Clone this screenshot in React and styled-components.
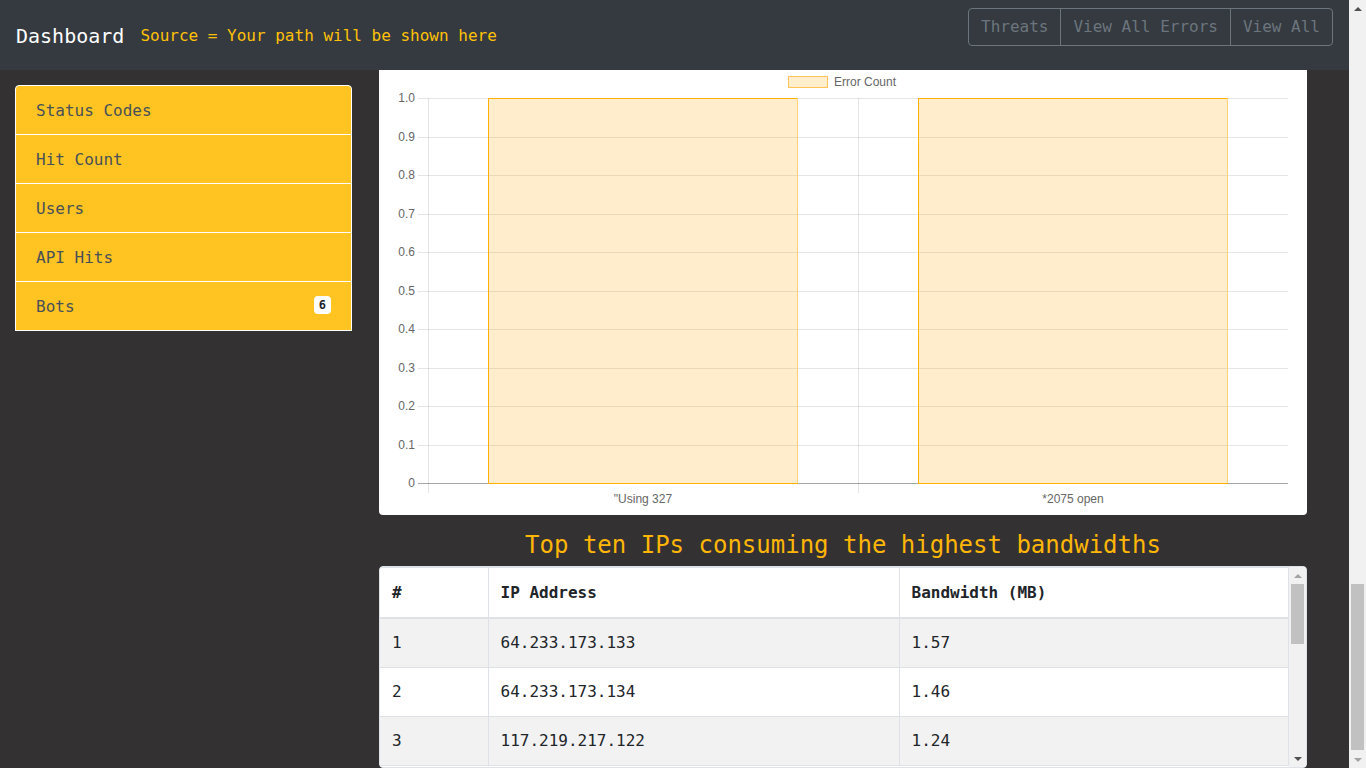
import React from 'react';
import styled, { createGlobalStyle } from 'styled-components';

const GlobalStyle = createGlobalStyle`
  html, body {
    margin: 0;
    padding: 0;
    height: 100%;
    overflow: hidden;
  }
  body {
    background: #333132;
    font-family: "DejaVu Sans Mono", "Liberation Mono", monospace;
  }
  * { box-sizing: border-box; }
`;

const topIps = [
  ['64.233.173.133', '1.57'],
  ['64.233.173.134', '1.46'],
  ['117.219.217.122', '1.24'],
];

const chartFont = 'Liberation Sans, Arial, sans-serif';
const barFill = 'rgba(255,167,0,0.2)';

function BarChart({ legend, labels, values, max = 1, steps = 10 }) {
  const W = 928, H = 445, L = 49, R = 909, T = 28, B = 413;
  const catW = (R - L) / labels.length;
  const barW = Math.round(catW * 0.72);
  const step = max / steps;
  const fmt = (v, i) => (i === 0 ? '0' : v.toFixed(1));
  const legendW = 46 + legend.length * 5.8;
  const lx = Math.round(W / 2 - legendW / 2);

  return (
    <svg width={W} height={H} viewBox={`0 0 ${W} ${H}`} style={{ display: 'block' }}>
      <rect x={lx + 0.5} y={6.5} width={39} height={11} fill={barFill} stroke="#ffc456" />
      <text x={lx + 46} y={16} fontFamily={chartFont} fontSize="12" fill="#666">{legend}</text>

      {Array.from({ length: steps + 1 }).map((_, i) => {
        const y = Math.round(B - (i * (B - T)) / steps) + 0.5;
        return (
          <g key={i}>
            <line x1={L - 10} x2={R} y1={y} y2={y} stroke={i === 0 ? 'rgba(0,0,0,0.35)' : 'rgba(0,0,0,0.1)'} />
            <text x={L - 13} y={y + 3} textAnchor="end" fontFamily={chartFont} fontSize="12" fill="#666">
              {fmt(i * step, i)}
            </text>
          </g>
        );
      })}

      {labels.map((_, i) => {
        const x = Math.round(L + i * catW) + 0.5;
        return <line key={i} x1={x} x2={x} y1={T} y2={B + 10} stroke="rgba(0,0,0,0.1)" />;
      })}

      {values.map((v, i) => {
        const h = Math.round(((B - T) * v) / max);
        const x = Math.round(L + i * catW + (catW - barW) / 2) + 0.5;
        return (
          <g key={i}>
            <rect x={x} y={B - h + 0.5} width={barW - 1} height={h} fill={barFill} stroke="#ffb000" />
            <line x1={x + barW - 1} x2={x + barW - 1} y1={B - h} y2={B} stroke="#ffd07a" />
          </g>
        );
      })}

      {labels.map((label, i) => (
        <text key={i} x={L + i * catW + catW / 2} y={433} textAnchor="middle" fontFamily={chartFont} fontSize="12" fill="#666">
          {label}
        </text>
      ))}
    </svg>
  );
}

function Scrollbar({ thumbOffset, thumbSize, upActive, downActive }) {
  return (
    <ScrollTrack>
      <ArrowBox>
        <ArrowUp $active={upActive} />
      </ArrowBox>
      <ThumbLane>
        <Thumb style={{ marginTop: thumbOffset, height: thumbSize }} />
      </ThumbLane>
      <ArrowBox>
        <ArrowDown $active={downActive} />
      </ArrowBox>
    </ScrollTrack>
  );
}

export default function App() {
  return (
    <>
      <GlobalStyle />
      <Root>
        <Page>
          <Header>
            <Brand>
              <Title>Dashboard</Title>
              <Source>Source = Your path will be shown here</Source>
            </Brand>
            <ButtonGroup>
              <NavButton>Threats</NavButton>
              <NavButton>View All Errors</NavButton>
              <NavButton>View All</NavButton>
            </ButtonGroup>
          </Header>

          <Layout>
            <Sidebar>
              <MenuItem>Status Codes</MenuItem>
              <MenuItem>Hit Count</MenuItem>
              <MenuItem>Users</MenuItem>
              <MenuItem>API Hits</MenuItem>
              <MenuItem>
                Bots
                <Badge>6</Badge>
              </MenuItem>
            </Sidebar>

            <Main>
              <Card>
                <BarChart legend="Error Count" labels={['"Using 327', '*2075 open']} values={[1, 1]} max={1} />
              </Card>

              <Heading>Top ten IPs consuming the highest bandwidths</Heading>
              <TableWrap>
                <TableArea>
                  <Table>
                    <thead>
                      <tr>
                        <Th $w={108}>#</Th>
                        <Th $w={411}>IP Address</Th>
                        <Th>Bandwidth (MB)</Th>
                      </tr>
                    </thead>
                    <tbody>
                      {topIps.map(([ip, mb], i) => (
                        <tr key={ip}>
                          <Td>{i + 1}</Td>
                          <Td>{ip}</Td>
                          <Td>{mb}</Td>
                        </tr>
                      ))}
                    </tbody>
                  </Table>
                </TableArea>
                <Scrollbar thumbOffset={0} thumbSize={60} upActive={false} downActive />
              </TableWrap>
            </Main>
          </Layout>
        </Page>
        <Scrollbar thumbOffset={567} thumbSize={166} upActive downActive={false} />
      </Root>
    </>
  );
}

const Root = styled.div`
  display: flex;
  height: 100vh;
  overflow: hidden;
  background: #333132;
`;

const Page = styled.div`
  flex: 1;
  min-width: 0;
  display: flex;
  flex-direction: column;
`;

const ScrollTrack = styled.div`
  width: 17px;
  flex: 0 0 17px;
  background: #f1f1f1;
  display: flex;
  flex-direction: column;
`;

const ArrowBox = styled.div`
  height: 17px;
  flex: 0 0 17px;
  display: flex;
  align-items: center;
  justify-content: center;
`;

const ArrowUp = styled.div`
  width: 0;
  height: 0;
  border-left: 4px solid transparent;
  border-right: 4px solid transparent;
  border-bottom: 4px solid ${(p) => (p.$active ? '#505050' : '#a3a3a3')};
`;

const ArrowDown = styled.div`
  width: 0;
  height: 0;
  border-left: 4px solid transparent;
  border-right: 4px solid transparent;
  border-top: 4px solid ${(p) => (p.$active ? '#505050' : '#a3a3a3')};
`;

const ThumbLane = styled.div`
  flex: 1;
  display: flex;
  flex-direction: column;
  padding: 0 2px;
`;

const Thumb = styled.div`
  background: #c1c1c1;
  flex: none;
`;

const Header = styled.header`
  height: 70px;
  flex: none;
  padding: 0 16px;
  background: #343a40;
  display: flex;
  justify-content: space-between;
  align-items: flex-start;
`;

const Brand = styled.div`
  height: 70px;
  display: flex;
  align-items: center;
  gap: 16px;
`;

const Title = styled.span`
  color: #fff;
  font-size: 20px;
  line-height: 30px;
  padding-top: 2px;
`;

const Source = styled.span`
  color: #ffc107;
  font-size: 16px;
  line-height: 24px;
  padding-top: 2px;
`;

const ButtonGroup = styled.div`
  display: flex;
  margin-top: 8px;
`;

const NavButton = styled.button`
  font-family: "DejaVu Sans Mono", "Liberation Mono", monospace;
  font-size: 16px;
  line-height: 24px;
  padding: 6px 12px;
  color: #6c757d;
  background: transparent;
  border: 1px solid #6c757d;
  border-radius: 0;

  & + & {
    margin-left: -1px;
  }
  &:first-child {
    border-radius: 4px 0 0 4px;
  }
  &:last-child {
    border-radius: 0 4px 4px 0;
  }
`;

const Layout = styled.div`
  display: grid;
  grid-template-columns: 337px 928px;
  column-gap: 27px;
  padding: 0 15px;
  align-items: start;
`;

const Sidebar = styled.nav`
  margin-top: 15px;
  display: flex;
  flex-direction: column;
`;

const MenuItem = styled.div`
  display: flex;
  justify-content: space-between;
  align-items: center;
  padding: 13px 20px 11px;
  font-size: 16px;
  line-height: 24px;
  color: #495057;
  background: #ffc422;
  border: 1px solid #fff;
  margin-bottom: -1px;

  &:first-child {
    border-radius: 4px 4px 0 0;
  }
`;

const Badge = styled.span`
  background: #fff;
  color: #212529;
  font-size: 12px;
  font-weight: 700;
  line-height: 12px;
  padding: 3px 5px;
  border-radius: 4px;
  margin-top: -4px;
`;

const Main = styled.main`
  display: flex;
  flex-direction: column;
`;

const Heading = styled.h3`
  margin: 16px 0 6px;
  font-size: 24px;
  line-height: 29px;
  font-weight: normal;
  text-align: center;
  color: #ffb606;
`;

const Card = styled.div`
  background: #fff;
  border-radius: 0 0 4px 4px;
  overflow: hidden;
`;

const TableWrap = styled.div`
  height: 202px;
  display: flex;
  background: #fff;
  border: 1px solid #dee2e6;
  border-radius: 4px;
  overflow: hidden;
`;

const TableArea = styled.div`
  flex: 1;
  min-width: 0;
  overflow: hidden;
`;

const Table = styled.table`
  width: 100%;
  border-collapse: collapse;
  color: #212529;
  font-size: 16px;
  line-height: 24px;

  tbody tr:nth-of-type(odd) {
    background: #f2f2f2;
  }
`;

const Th = styled.th`
  width: ${(p) => (p.$w ? `${p.$w}px` : 'auto')};
  text-align: left;
  font-weight: 700;
  padding: 13px 12px 12px;
  border: 1px solid #dee2e6;
  border-bottom: 2px solid #dee2e6;

  &:first-child { border-left: none; }
`;

const Td = styled.td`
  padding: 12px;
  border: 1px solid #dee2e6;

  &:first-child { border-left: none; }
`;
